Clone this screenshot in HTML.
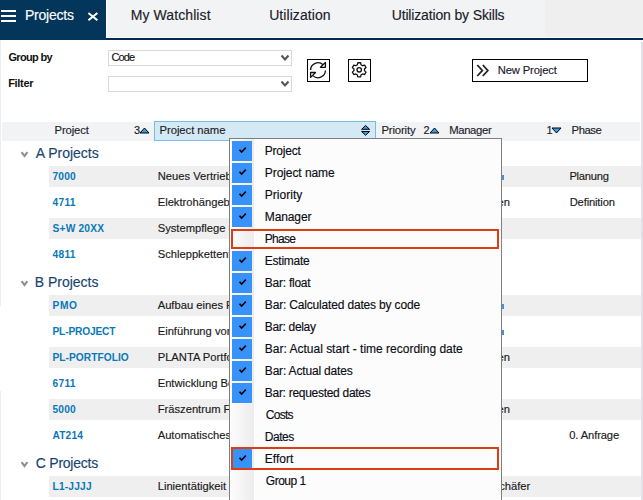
<!DOCTYPE html>
<html><head><meta charset="utf-8"><style>
html,body{margin:0;padding:0;}
body{width:643px;height:500px;overflow:hidden;position:relative;background:#fff;font-family:"Liberation Sans",sans-serif;}
.t{position:absolute;white-space:nowrap;-webkit-text-stroke:0.15px currentColor;}
.r{position:absolute;}
svg.r{overflow:visible}
</style></head><body>
<div class="r" style="left:107px;top:0px;width:438px;height:37px;background:#f2f3f5;"></div>
<div class="r" style="left:545px;top:0px;width:98px;height:37px;background:#efefef;"></div>
<div class="r" style="left:0px;top:38px;width:643px;height:2px;background:#012a52;"></div>
<div class="r" style="left:0px;top:0px;width:106px;height:40px;background:#03365a;"></div>
<div class="r" style="left:1px;top:10px;width:14.5px;height:2px;background:#fff;"></div>
<div class="r" style="left:1px;top:15px;width:14.5px;height:2px;background:#fff;"></div>
<div class="r" style="left:1px;top:20px;width:14.5px;height:2px;background:#fff;"></div>
<div class="t" style="left:25.00px;top:7px;font-size:14px;line-height:17px;color:#fff;font-weight:400;letter-spacing:-0.229px;">Projects</div>
<svg class="r" style="left:86px;top:11px" width="14" height="11" viewBox="0 0 14 11"><path d="M2.4 2L11.4 9.2M11.4 2L2.4 9.2" stroke="#fff" stroke-width="2" fill="none"/></svg>
<div class="t" style="left:130.80px;top:7px;font-size:14px;line-height:17px;color:#1c1c2a;font-weight:400;letter-spacing:0.082px;">My Watchlist</div>
<div class="t" style="left:269.20px;top:7px;font-size:14px;line-height:17px;color:#1c1c2a;font-weight:400;letter-spacing:0.070px;">Utilization</div>
<div class="t" style="left:391.70px;top:7px;font-size:14px;line-height:17px;color:#1c1c2a;font-weight:400;letter-spacing:-0.150px;">Utilization by Skills</div>
<div class="r" style="left:0px;top:40px;width:1px;height:266px;background:#ededed;"></div>
<div class="r" style="left:0px;top:391px;width:1px;height:109px;background:#ededed;"></div>
<div class="r" style="left:641px;top:42px;width:2px;height:458px;background:#e3e0e6;"></div>
<div class="t" style="left:8.40px;top:51px;font-size:11px;line-height:13px;color:#111;font-weight:700;letter-spacing:-0.657px;-webkit-text-stroke:0;">Group by</div>
<div class="t" style="left:8.20px;top:77px;font-size:11px;line-height:13px;color:#111;font-weight:700;letter-spacing:-0.320px;-webkit-text-stroke:0;">Filter</div>
<div class="r" style="left:108px;top:50px;width:182px;height:14px;border:1px solid #d9d9d9;background:#fff"></div>
<div class="t" style="left:111.60px;top:51px;font-size:11px;line-height:13px;color:#111;font-weight:400;letter-spacing:-0.933px;">Code</div>
<svg class="r" style="left:280px;top:54px" width="10" height="8" viewBox="0 0 10 8"><path d="M1.5 1.5L5 5.5L8.5 1.5" stroke="#555" stroke-width="2" fill="none"/></svg>
<div class="r" style="left:108px;top:76px;width:182px;height:14px;border:1px solid #d9d9d9;background:#fff"></div>
<svg class="r" style="left:280px;top:80px" width="10" height="8" viewBox="0 0 10 8"><path d="M1.5 1.5L5 5.5L8.5 1.5" stroke="#555" stroke-width="2" fill="none"/></svg>
<div class="r" style="left:307px;top:59px;width:21px;height:21px;border:1px solid #000"></div>
<svg class="r" style="left:307px;top:59px" width="23" height="23" viewBox="0 0 23 23">
<path d="M3.6 11 A7.4 7.4 0 0 1 16.2 5.9" stroke="#111" stroke-width="1.3" fill="none"/>
<path d="M18.4 11.6 A7.4 7.4 0 0 1 5.8 16.6" stroke="#111" stroke-width="1.3" fill="none"/>
<path d="M18.4 3.4 L18.4 8.3 L13.5 8.3 Z" stroke="#111" stroke-width="1.3" fill="#fff" stroke-linejoin="round"/>
<path d="M3.6 18.4 L3.6 13.5 L8.5 13.5 Z" stroke="#111" stroke-width="1.3" fill="#fff" stroke-linejoin="round"/>
</svg>
<div class="r" style="left:348px;top:59px;width:21px;height:21px;border:1px solid #000"></div>
<svg class="r" style="left:348px;top:59px" width="23" height="23" viewBox="0 0 23 23">
<path d="M9.30 5.85 L9.83 3.73 L12.57 3.73 L13.10 5.85 A5.30 5.30 0 0 1 14.54 6.68 L16.63 6.08 L18.01 8.46 L16.43 9.97 A5.30 5.30 0 0 1 16.43 11.63 L18.01 13.14 L16.63 15.52 L14.54 14.92 A5.30 5.30 0 0 1 13.10 15.75 L12.57 17.87 L9.83 17.87 L9.30 15.75 A5.30 5.30 0 0 1 7.86 14.92 L5.77 15.52 L4.39 13.14 L5.97 11.63 A5.30 5.30 0 0 1 5.97 9.97 L4.39 8.46 L5.77 6.08 L7.86 6.68 A5.30 5.30 0 0 1 9.30 5.85 Z" stroke="#111" stroke-width="1.3" fill="none" stroke-linejoin="round"/>
<circle cx="11.2" cy="10.8" r="2.2" stroke="#111" stroke-width="1.3" fill="none"/>
</svg>
<div class="r" style="left:472px;top:59px;width:114px;height:21px;border:1px solid #000"></div>
<svg class="r" style="left:475px;top:63px" width="16" height="15" viewBox="0 0 16 15"><path d="M2.3 2L7.3 7.5L2.3 13M7.8 2L12.8 7.5L7.8 13" stroke="#222" stroke-width="1.8" fill="none"/></svg>
<div class="t" style="left:497.80px;top:64px;font-size:11.2px;line-height:13px;color:#1a1a2a;font-weight:400;letter-spacing:-0.130px;">New Project</div>
<div class="r" style="left:2px;top:122px;width:638px;height:19px;background:#f2f3f5;"></div>
<div class="t" style="left:54.60px;top:123px;font-size:11.3px;line-height:14px;color:#1c1c2a;font-weight:400;letter-spacing:-0.150px;">Project</div>
<div class="t" style="left:134.00px;top:124px;font-size:11px;line-height:13px;color:#1c1c2a;font-weight:400;letter-spacing:0.000px;">3</div>
<svg class="r" style="left:139px;top:127px" width="11" height="7" viewBox="0 0 11 7"><path d="M1 6L5.5 1L10 6Z" fill="#3a9be0" stroke="#000" stroke-width="1"/></svg>
<div class="r" style="left:154px;top:121px;width:220px;height:18px;border:1px solid #74c0e4;background:#d5e9f5"></div>
<div class="t" style="left:159.50px;top:123px;font-size:11.3px;line-height:14px;color:#1c1c2a;font-weight:400;letter-spacing:-0.055px;">Project name</div>
<svg class="r" style="left:360px;top:124px" width="12" height="13" viewBox="0 0 12 13"><path d="M1.6 5.3L5.6 1.5L9.6 5.3Z M1.6 7.5L5.6 11.3L9.6 7.5Z" fill="#3a9be0" stroke="#000" stroke-width="1" stroke-linejoin="round"/></svg>
<div class="t" style="left:381.40px;top:123px;font-size:11.3px;line-height:14px;color:#1c1c2a;font-weight:400;letter-spacing:-0.129px;">Priority</div>
<div class="t" style="left:423.60px;top:124px;font-size:11px;line-height:13px;color:#1c1c2a;font-weight:400;letter-spacing:0.000px;">2</div>
<svg class="r" style="left:429px;top:127px" width="11" height="7" viewBox="0 0 11 7"><path d="M1 6L5.5 1L10 6Z" fill="#3a9be0" stroke="#000" stroke-width="1"/></svg>
<div class="t" style="left:449.20px;top:123px;font-size:11.3px;line-height:14px;color:#1c1c2a;font-weight:400;letter-spacing:-0.350px;">Manager</div>
<div class="t" style="left:546.40px;top:124px;font-size:11px;line-height:13px;color:#1c1c2a;font-weight:400;letter-spacing:0.000px;">1</div>
<svg class="r" style="left:551px;top:127px" width="11" height="7" viewBox="0 0 11 7"><path d="M1 1L5.5 6L10 1Z" fill="#3a9be0" stroke="#000" stroke-width="1"/></svg>
<div class="t" style="left:571.60px;top:123px;font-size:11.3px;line-height:14px;color:#1c1c2a;font-weight:400;letter-spacing:-0.475px;">Phase</div>
<svg class="r" style="left:20px;top:150.5px" width="10" height="7" viewBox="0 0 10 7"><path d="M1.6 1.2L4.5 5.1L7.4 1.2" stroke="#8e8e8e" stroke-width="2.1" fill="none"/></svg>
<div class="t" style="left:35.80px;top:145px;font-size:14px;line-height:17px;color:#18446f;font-weight:400;letter-spacing:-0.022px;">A Projects</div>
<div class="r" style="left:49px;top:166px;width:592px;height:21px;background:#efefef;"></div>
<div class="t" style="left:52.50px;top:171px;font-size:10.2px;line-height:12px;color:#0a78b8;font-weight:700;letter-spacing:0.167px;transform:scaleY(1.13);transform-origin:0 9px;-webkit-text-stroke:0;">7000</div>
<div class="t" style="left:157.70px;top:170px;font-size:11.2px;line-height:13px;color:#1a1a1a;font-weight:400;letter-spacing:0.000px;">Neues Vertriebsgebiet</div>
<div class="t" style="left:52.50px;top:197px;font-size:10.2px;line-height:12px;color:#0a78b8;font-weight:700;letter-spacing:0.300px;transform:scaleY(1.13);transform-origin:0 9px;-webkit-text-stroke:0;">4711</div>
<div class="t" style="left:157.70px;top:196px;font-size:11.2px;line-height:13px;color:#1a1a1a;font-weight:400;letter-spacing:0.000px;">Elektrohängebahn</div>
<div class="r" style="left:49px;top:218px;width:592px;height:21px;background:#efefef;"></div>
<div class="t" style="left:52.50px;top:223px;font-size:10.2px;line-height:12px;color:#0a78b8;font-weight:700;letter-spacing:0.200px;transform:scaleY(1.13);transform-origin:0 9px;-webkit-text-stroke:0;">S+W 20XX</div>
<div class="t" style="left:157.70px;top:222px;font-size:11.2px;line-height:13px;color:#1a1a1a;font-weight:400;letter-spacing:0.000px;">Systempflege und Wartung</div>
<div class="t" style="left:52.50px;top:249px;font-size:10.2px;line-height:12px;color:#0a78b8;font-weight:700;letter-spacing:0.300px;transform:scaleY(1.13);transform-origin:0 9px;-webkit-text-stroke:0;">4811</div>
<div class="t" style="left:157.70px;top:248px;font-size:11.2px;line-height:13px;color:#1a1a1a;font-weight:400;letter-spacing:0.000px;">Schleppkettenförderer</div>
<svg class="r" style="left:20px;top:279.5px" width="10" height="7" viewBox="0 0 10 7"><path d="M1.6 1.2L4.5 5.1L7.4 1.2" stroke="#8e8e8e" stroke-width="2.1" fill="none"/></svg>
<div class="t" style="left:34.80px;top:274px;font-size:14px;line-height:17px;color:#18446f;font-weight:400;letter-spacing:-0.022px;">B Projects</div>
<div class="r" style="left:49px;top:295px;width:592px;height:21px;background:#efefef;"></div>
<div class="t" style="left:52.50px;top:300px;font-size:10.2px;line-height:12px;color:#0a78b8;font-weight:700;letter-spacing:0.600px;transform:scaleY(1.13);transform-origin:0 9px;-webkit-text-stroke:0;">PMO</div>
<div class="t" style="left:157.70px;top:299px;font-size:11.2px;line-height:13px;color:#1a1a1a;font-weight:400;letter-spacing:0.000px;">Aufbau eines Projektbüros</div>
<div class="t" style="left:52.50px;top:326px;font-size:10.2px;line-height:12px;color:#0a78b8;font-weight:700;letter-spacing:-0.178px;transform:scaleY(1.13);transform-origin:0 9px;-webkit-text-stroke:0;">PL-PROJECT</div>
<div class="t" style="left:157.70px;top:325px;font-size:11.2px;line-height:13px;color:#1a1a1a;font-weight:400;letter-spacing:0.000px;">Einführung von PLANTA project</div>
<div class="r" style="left:49px;top:347px;width:592px;height:21px;background:#efefef;"></div>
<div class="t" style="left:52.50px;top:352px;font-size:10.2px;line-height:12px;color:#0a78b8;font-weight:700;letter-spacing:0.036px;transform:scaleY(1.13);transform-origin:0 9px;-webkit-text-stroke:0;">PL-PORTFOLIO</div>
<div class="t" style="left:157.70px;top:351px;font-size:11.2px;line-height:13px;color:#1a1a1a;font-weight:400;letter-spacing:0.000px;">PLANTA Portfolio</div>
<div class="t" style="left:52.50px;top:378px;font-size:10.2px;line-height:12px;color:#0a78b8;font-weight:700;letter-spacing:0.300px;transform:scaleY(1.13);transform-origin:0 9px;-webkit-text-stroke:0;">6711</div>
<div class="t" style="left:157.70px;top:377px;font-size:11.2px;line-height:13px;color:#1a1a1a;font-weight:400;letter-spacing:0.000px;">Entwicklung Bohrmaschine</div>
<div class="r" style="left:49px;top:399px;width:592px;height:21px;background:#efefef;"></div>
<div class="t" style="left:52.50px;top:404px;font-size:10.2px;line-height:12px;color:#0a78b8;font-weight:700;letter-spacing:0.167px;transform:scaleY(1.13);transform-origin:0 9px;-webkit-text-stroke:0;">5000</div>
<div class="t" style="left:157.70px;top:403px;font-size:11.2px;line-height:13px;color:#1a1a1a;font-weight:400;letter-spacing:0.000px;">Fräszentrum FZ 2000</div>
<div class="t" style="left:52.50px;top:430px;font-size:10.2px;line-height:12px;color:#0a78b8;font-weight:700;letter-spacing:0.150px;transform:scaleY(1.13);transform-origin:0 9px;-webkit-text-stroke:0;">AT214</div>
<div class="t" style="left:157.70px;top:429px;font-size:11.2px;line-height:13px;color:#1a1a1a;font-weight:400;letter-spacing:0.000px;">Automatisches Tor</div>
<svg class="r" style="left:20px;top:460.5px" width="10" height="7" viewBox="0 0 10 7"><path d="M1.6 1.2L4.5 5.1L7.4 1.2" stroke="#8e8e8e" stroke-width="2.1" fill="none"/></svg>
<div class="t" style="left:35.80px;top:455px;font-size:14px;line-height:17px;color:#18446f;font-weight:400;letter-spacing:-0.244px;">C Projects</div>
<div class="r" style="left:49px;top:476px;width:592px;height:21px;background:#efefef;"></div>
<div class="t" style="left:52.50px;top:481px;font-size:10.2px;line-height:12px;color:#0a78b8;font-weight:700;letter-spacing:0.183px;transform:scaleY(1.13);transform-origin:0 9px;-webkit-text-stroke:0;">L1-JJJJ</div>
<div class="t" style="left:157.70px;top:480px;font-size:11.2px;line-height:13px;color:#1a1a1a;font-weight:400;letter-spacing:0.000px;">Linientätigkeit</div>
<div class="t" style="left:569.40px;top:170px;font-size:11.2px;line-height:13px;color:#1a1a1a;font-weight:400;letter-spacing:-0.233px;">Planung</div>
<div class="t" style="left:569.70px;top:196px;font-size:11.2px;line-height:13px;color:#1a1a1a;font-weight:400;letter-spacing:-0.156px;">Definition</div>
<div class="t" style="left:569.20px;top:429px;font-size:11.2px;line-height:13px;color:#1a1a1a;font-weight:400;letter-spacing:-0.111px;">0. Anfrage</div>
<div class="r" style="left:502px;top:175px;width:1.5px;height:5px;background:#4a90d0;"></div>
<div class="r" style="left:502px;top:304px;width:1.5px;height:5px;background:#4a90d0;"></div>
<div class="r" style="left:502px;top:330px;width:1.5px;height:5px;background:#4a90d0;"></div>
<div class="t" style="left:465.20px;top:196px;font-size:11.2px;line-height:13px;color:#1a1a1a;font-weight:400;letter-spacing:0.000px;">Petersen</div>
<div class="t" style="left:465.20px;top:351px;font-size:11.2px;line-height:13px;color:#1a1a1a;font-weight:400;letter-spacing:0.000px;">Petersen</div>
<div class="t" style="left:465.20px;top:403px;font-size:11.2px;line-height:13px;color:#1a1a1a;font-weight:400;letter-spacing:0.000px;">Petersen</div>
<div class="t" style="left:425.80px;top:480px;font-size:11.2px;line-height:13px;color:#1a1a1a;font-weight:400;letter-spacing:0.000px;">Mustermann-Schäfer</div>
<div class="r" style="left:229px;top:138px;width:271px;height:400px;border:1px solid #7f7f7f;border-bottom:none;background:#fcfcfc"></div>
<div class="r" style="left:230px;top:139px;width:24px;height:361px;background:linear-gradient(to right,#fdfdfd,#ececec);"></div>
<div class="r" style="left:232px;top:141px;width:20px;height:20px;background:#3793fa;"></div>
<svg class="r" style="left:237px;top:146px" width="11" height="10" viewBox="0 0 11 10"><path d="M2.5 3.7L4.6 6L8.8 1.6" stroke="#000" stroke-width="1.6" fill="none"/></svg>
<div class="t" style="left:264.80px;top:144px;font-size:12px;line-height:14px;color:#0c0c14;font-weight:400;letter-spacing:-0.217px;">Project</div>
<div class="r" style="left:232px;top:163px;width:20px;height:20px;background:#3793fa;"></div>
<svg class="r" style="left:237px;top:168px" width="11" height="10" viewBox="0 0 11 10"><path d="M2.5 3.7L4.6 6L8.8 1.6" stroke="#000" stroke-width="1.6" fill="none"/></svg>
<div class="t" style="left:264.80px;top:166px;font-size:12px;line-height:14px;color:#0c0c14;font-weight:400;letter-spacing:-0.073px;">Project name</div>
<div class="r" style="left:232px;top:185px;width:20px;height:20px;background:#3793fa;"></div>
<svg class="r" style="left:237px;top:190px" width="11" height="10" viewBox="0 0 11 10"><path d="M2.5 3.7L4.6 6L8.8 1.6" stroke="#000" stroke-width="1.6" fill="none"/></svg>
<div class="t" style="left:264.80px;top:188px;font-size:12px;line-height:14px;color:#0c0c14;font-weight:400;letter-spacing:0.014px;">Priority</div>
<div class="r" style="left:232px;top:207px;width:20px;height:20px;background:#3793fa;"></div>
<svg class="r" style="left:237px;top:212px" width="11" height="10" viewBox="0 0 11 10"><path d="M2.5 3.7L4.6 6L8.8 1.6" stroke="#000" stroke-width="1.6" fill="none"/></svg>
<div class="t" style="left:264.80px;top:210px;font-size:12px;line-height:14px;color:#0c0c14;font-weight:400;letter-spacing:-0.117px;">Manager</div>
<div class="t" style="left:264.80px;top:232px;font-size:12px;line-height:14px;color:#0c0c14;font-weight:400;letter-spacing:-0.750px;">Phase</div>
<div class="r" style="left:232px;top:251px;width:20px;height:20px;background:#3793fa;"></div>
<svg class="r" style="left:237px;top:256px" width="11" height="10" viewBox="0 0 11 10"><path d="M2.5 3.7L4.6 6L8.8 1.6" stroke="#000" stroke-width="1.6" fill="none"/></svg>
<div class="t" style="left:264.80px;top:254px;font-size:12px;line-height:14px;color:#0c0c14;font-weight:400;letter-spacing:-0.243px;">Estimate</div>
<div class="r" style="left:232px;top:273px;width:20px;height:20px;background:#3793fa;"></div>
<svg class="r" style="left:237px;top:278px" width="11" height="10" viewBox="0 0 11 10"><path d="M2.5 3.7L4.6 6L8.8 1.6" stroke="#000" stroke-width="1.6" fill="none"/></svg>
<div class="t" style="left:264.80px;top:276px;font-size:12px;line-height:14px;color:#0c0c14;font-weight:400;letter-spacing:-0.244px;">Bar: float</div>
<div class="r" style="left:232px;top:295px;width:20px;height:20px;background:#3793fa;"></div>
<svg class="r" style="left:237px;top:300px" width="11" height="10" viewBox="0 0 11 10"><path d="M2.5 3.7L4.6 6L8.8 1.6" stroke="#000" stroke-width="1.6" fill="none"/></svg>
<div class="t" style="left:264.80px;top:298px;font-size:12px;line-height:14px;color:#0c0c14;font-weight:400;letter-spacing:-0.171px;">Bar: Calculated dates by code</div>
<div class="r" style="left:232px;top:317px;width:20px;height:20px;background:#3793fa;"></div>
<svg class="r" style="left:237px;top:322px" width="11" height="10" viewBox="0 0 11 10"><path d="M2.5 3.7L4.6 6L8.8 1.6" stroke="#000" stroke-width="1.6" fill="none"/></svg>
<div class="t" style="left:264.80px;top:320px;font-size:12px;line-height:14px;color:#0c0c14;font-weight:400;letter-spacing:-0.322px;">Bar: delay</div>
<div class="r" style="left:232px;top:339px;width:20px;height:20px;background:#3793fa;"></div>
<svg class="r" style="left:237px;top:344px" width="11" height="10" viewBox="0 0 11 10"><path d="M2.5 3.7L4.6 6L8.8 1.6" stroke="#000" stroke-width="1.6" fill="none"/></svg>
<div class="t" style="left:264.80px;top:342px;font-size:12px;line-height:14px;color:#0c0c14;font-weight:400;letter-spacing:-0.003px;">Bar: Actual start - time recording date</div>
<div class="r" style="left:232px;top:361px;width:20px;height:20px;background:#3793fa;"></div>
<svg class="r" style="left:237px;top:366px" width="11" height="10" viewBox="0 0 11 10"><path d="M2.5 3.7L4.6 6L8.8 1.6" stroke="#000" stroke-width="1.6" fill="none"/></svg>
<div class="t" style="left:264.80px;top:364px;font-size:12px;line-height:14px;color:#0c0c14;font-weight:400;letter-spacing:-0.175px;">Bar: Actual dates</div>
<div class="r" style="left:232px;top:383px;width:20px;height:20px;background:#3793fa;"></div>
<svg class="r" style="left:237px;top:388px" width="11" height="10" viewBox="0 0 11 10"><path d="M2.5 3.7L4.6 6L8.8 1.6" stroke="#000" stroke-width="1.6" fill="none"/></svg>
<div class="t" style="left:264.80px;top:386px;font-size:12px;line-height:14px;color:#0c0c14;font-weight:400;letter-spacing:-0.289px;">Bar: requested dates</div>
<div class="t" style="left:265.80px;top:408px;font-size:12px;line-height:14px;color:#0c0c14;font-weight:400;letter-spacing:-0.750px;">Costs</div>
<div class="t" style="left:264.80px;top:430px;font-size:12px;line-height:14px;color:#0c0c14;font-weight:400;letter-spacing:-0.500px;">Dates</div>
<div class="r" style="left:232px;top:449px;width:20px;height:20px;background:#3793fa;"></div>
<svg class="r" style="left:237px;top:454px" width="11" height="10" viewBox="0 0 11 10"><path d="M2.5 3.7L4.6 6L8.8 1.6" stroke="#000" stroke-width="1.6" fill="none"/></svg>
<div class="t" style="left:264.80px;top:452px;font-size:12px;line-height:14px;color:#0c0c14;font-weight:400;letter-spacing:0.000px;">Effort</div>
<div class="t" style="left:265.80px;top:474px;font-size:12px;line-height:14px;color:#0c0c14;font-weight:400;letter-spacing:-0.483px;">Group 1</div>
<div class="r" style="left:231px;top:229px;width:264px;height:16px;border:2px solid #e03c12"></div>
<div class="r" style="left:231px;top:447px;width:264px;height:19px;border:2px solid #e03c12"></div>
</body></html>
